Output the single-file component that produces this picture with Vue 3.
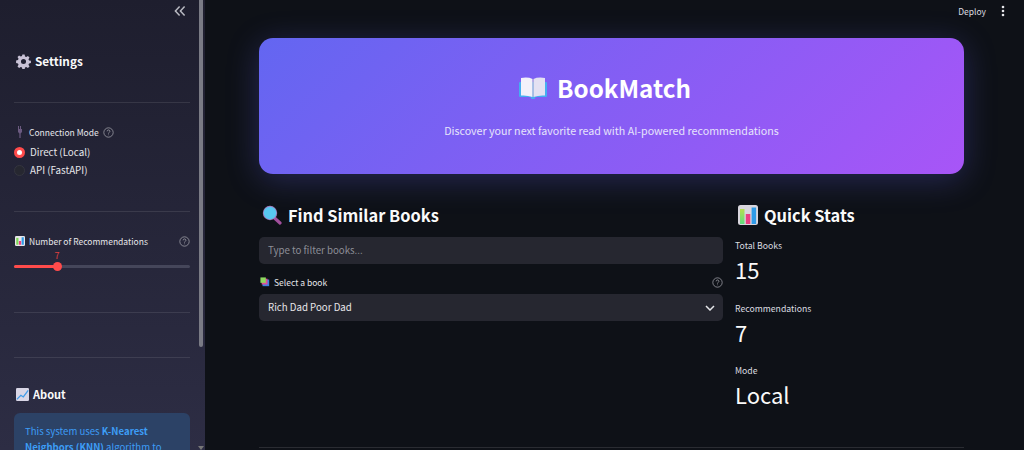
<template>
  <div class="app">
    <aside class="sidebar">
      <div class="collapse-row">
        <svg width="12" height="12" viewBox="0 0 12 12" fill="none" stroke="#b9bac2" stroke-width="1.5">
          <path d="M5.6 1.5 1.4 6l4.2 4.500M10.600 1.500 6.400 6l4.200 4.500" />
        </svg>
      </div>

      <h3 class="side-title settings-title">
        <svg class="gear" viewBox="0 0 16 16">
          <path fill="#c9c2d6" fill-rule="evenodd" d="M6.800.6h2.400l.4 2 1.300.6 1.800-1.100 1.700 1.700-1.100 1.800.6 1.300 2 .4v2.400l-2 .4-.6 1.300 1.100 1.800-1.700 1.700-1.800-1.100-1.300.6-.4 2H6.800l-.4-2-1.300-.6-1.800 1.100-1.700-1.700 1.100-1.800-.6-1.300-2-.4V6.800l2-.4.600-1.300-1.100-1.800 1.700-1.700 1.800 1.100 1.300-.6zM8 5.300a2.700 2.700 0 1 0 0 5.400 2.700 2.700 0 0 0 0-5.400z" />
        </svg>
        Settings
      </h3>
      <hr class="side-rule first-rule" />

      <div class="side-label conn-label">
        <svg class="plug" width="6" height="12" viewBox="0 0 6 12">
          <path fill="#6b5a80" d="M1 0h1v3h1V0h1v3h1v3L3.600 7.500V12H2.400V7.500L1 6z" />
        </svg>
        <span>Connection Mode</span>
        <svg class="help" viewBox="0 0 16 16" fill="none" stroke="#a3a4ab" stroke-width="1.100">
          <circle cx="8" cy="8" r="6.800" />
          <path d="M6 6.300a2 2 0 1 1 3 1.700c-.7.400-1 .8-1 1.500M8 11v.900" />
        </svg>
      </div>
      <div class="radio-row">
        <span class="radio on"></span>
        <span>Direct (Local)</span>
      </div>
      <div class="radio-row">
        <span class="radio"></span>
        <span>API (FastAPI)</span>
      </div>
      <hr class="side-rule second-rule" />

      <div class="side-label rec-label">
        <svg class="emoji-12" viewBox="0 0 16 16">
          <rect width="16" height="16" rx="2" fill="#e8e6ea" />
          <rect x="2" y="3" width="3.500" height="11" fill="#7fd858" />
          <rect x="6.300" y="8" width="3.500" height="6" fill="#ea3f83" />
          <rect x="10.600" y="2" width="3.500" height="12" fill="#2f9be8" />
        </svg>
        <span class="grow">Number of Recommendations</span>
        <svg class="help" viewBox="0 0 16 16" fill="none" stroke="#a3a4ab" stroke-width="1.100">
          <circle cx="8" cy="8" r="6.800" />
          <path d="M6 6.300a2 2 0 1 1 3 1.700c-.7.400-1 .8-1 1.500M8 11v.900" />
        </svg>
      </div>
      <div class="slider">
        <span class="slider-value" :style="{ left: sliderPos + '%' }">{{ recommendations }}</span>
        <div class="slider-track">
          <div class="slider-fill" :style="{ width: sliderPos + '%' }"></div>
          <span class="slider-thumb" :style="{ left: sliderPos + '%' }"></span>
        </div>
      </div>
      <hr class="side-rule third-rule" />
      <hr class="side-rule fourth-rule" />

      <h3 class="side-title about-title">
        <svg class="emoji-13" viewBox="0 0 16 16" fill="none">
          <rect width="16" height="16" rx="1.500" fill="#d9d6e6" />
          <path d="M1 14 6 9l3 2 6-8" stroke="#3f9be8" stroke-width="1.600" />
        </svg>
        About
      </h3>
      <div class="info-box">
        This system uses <b>K-Nearest Neighbors (KNN)</b> algorithm to find books similar to your selection.
      </div>

      <div class="side-scrollbar"></div>
      <svg class="scroll-arrow" width="6" height="4" viewBox="0 0 6 4"><path fill="#777" d="M0 0h6L3 4z" /></svg>
    </aside>

    <main class="main">
      <header class="topbar">
        <span class="deploy">Deploy</span>
        <svg width="4" height="12" viewBox="0 0 4 12" fill="#e6e7ea">
          <circle cx="2" cy="2" r="1.300" />
          <circle cx="2" cy="6" r="1.300" />
          <circle cx="2" cy="10" r="1.300" />
        </svg>
      </header>

      <div class="content">
        <section class="hero">
          <h1 class="hero-title">
            <svg class="book-icon" viewBox="0 0 28 22">
              <path fill="#45aef0" d="M1 5h26a1 1 0 0 1 1 1v13a1 1 0 0 1-1 1H16.500l-1 2h-3l-1-2H1a1 1 0 0 1-1-1V6a1 1 0 0 1 1-1z" />
              <path fill="#f3f1fa" d="M2 1q7-1.200 11.600 1V20Q8 18 2 18.500z" />
              <path fill="#e4e1f2" d="M26 1q-7-1.200-11.600 1V20Q20 18 26 18.500z" />
              <path fill="#a9a4cf" d="M13.600 2h.8v18h-.8z" />
            </svg>
            BookMatch
          </h1>
          <p class="hero-sub">Discover your next favorite read with AI-powered recommendations</p>
        </section>

        <div class="columns">
          <section class="col-left">
            <h2 class="col-title">
              <svg class="emoji-20" viewBox="0 0 20 20">
                <path d="m12.500 13 5.500 5" stroke="#a14f9c" stroke-width="3.200" stroke-linecap="round" fill="none" />
                <circle cx="8" cy="8" r="7.200" fill="#9c7fc0" />
                <circle cx="8" cy="8" r="6.200" fill="#58c8f2" />
              </svg>
              Find Similar Books
            </h2>
            <div class="field placeholder">Type to filter books...</div>
            <div class="select-label">
              <svg class="emoji-10" viewBox="0 0 12 12">
                <rect x="3" y="3" width="8" height="8" fill="#3f7fe0" />
                <rect x="2" y="2" width="7" height="7" fill="#e0509a" />
                <rect x="0.500" y="0.500" width="6.500" height="6.500" fill="#8fd860" />
              </svg>
              <span class="grow">Select a book</span>
              <svg class="help" viewBox="0 0 16 16" fill="none" stroke="#a3a4ab" stroke-width="1.100">
                <circle cx="8" cy="8" r="6.800" />
                <path d="M6 6.300a2 2 0 1 1 3 1.700c-.7.400-1 .8-1 1.500M8 11v.900" />
              </svg>
            </div>
            <div class="field select-box">
              <span>{{ selectedBook }}</span>
              <svg width="10" height="6" viewBox="0 0 10 6" fill="none" stroke="#e6e7ea" stroke-width="1.500">
                <path d="m1 1 4 4 4-4" />
              </svg>
            </div>
          </section>

          <section class="col-right">
            <h2 class="col-title">
              <svg class="emoji-20" viewBox="0 0 20 20">
                <defs>
                  <linearGradient id="bar-green" x1="0" y1="0" x2="0" y2="1">
                    <stop offset="0" stop-color="#b5e04e" />
                    <stop offset="1" stop-color="#5fdc80" />
                  </linearGradient>
                </defs>
                <rect width="20" height="20" rx="2.500" fill="#d9d6de" />
                <rect x="2" y="4" width="4.500" height="15" fill="url(#bar-green)" />
                <rect x="7.800" y="9" width="4.500" height="10" fill="#ea3f83" />
                <rect x="13.600" y="2.500" width="4.500" height="16.500" fill="#2f9be8" />
              </svg>
              Quick Stats
            </h2>
            <div class="metrics">
              <div v-for="stat in stats" :key="stat.label" class="metric">
                <div class="metric-label">{{ stat.label }}</div>
                <div class="metric-value">{{ stat.value }}</div>
              </div>
            </div>
          </section>
        </div>

        <hr class="main-rule" />
      </div>
    </main>
  </div>
</template>

<script setup>
const recommendations = 7
const sliderPos = 24.500
const selectedBook = 'Rich Dad Poor Dad'

const stats = [
  { label: 'Total Books', value: '15' },
  { label: 'Recommendations', value: '7' },
  { label: 'Mode', value: 'Local' },
]
</script>

<style>
html,
body {
  margin: 0;
  background: #0e1117;
  overflow: hidden;
}
</style>

<style scoped>
.app {
  display: flex;
  width: 1024px;
  height: 450px;
  overflow: hidden;
  background: #0e1117;
  color: #fafafa;
  font-family: "Noto Sans CJK SC", "Noto Sans", sans-serif;
}

.sidebar {
  position: relative;
  flex: 0 0 205px;
  box-sizing: border-box;
  height: 450px;
  overflow: hidden;
  padding: 0 14px;
  background: linear-gradient(180deg, #1e1e2e 0%, #2d2d44 100%);
}

.collapse-row {
  display: flex;
  justify-content: flex-end;
  height: 12px;
  padding: 5px 5px 0 0;
}

.side-title {
  display: flex;
  align-items: center;
  gap: 4px;
  margin: 0;
  font-size: 11.800px;
  font-weight: 600;
  line-height: 20px;
  width: 176px;
}

.settings-title {
  margin-top: 34px;
}

.gear {
  width: 15px;
  height: 15px;
  margin-left: 2px;
  flex: none;
}

.side-rule {
  width: 176px;
  height: 1px;
  margin: 0;
  border: 0;
  background: rgba(250, 250, 250, 0.1);
}

.first-rule { margin-top: 31px; }
.second-rule { margin-top: 32px; }
.third-rule { margin-top: 42px; }
.fourth-rule { margin-top: 44px; }

.side-label {
  display: flex;
  align-items: center;
  width: 176px;
  font-size: 8.500px;
  line-height: 14px;
  color: #e6e6ea;
}

.conn-label {
  margin-top: 22px;
  margin-bottom: 4px;
}

.plug {
  margin: 0 6px 0 3px;
}

.conn-label .help {
  margin-left: 4px;
}

.rec-label {
  margin-top: 22px;
  margin-left: 1px;
  width: 175px;
}

.rec-label .emoji-12 {
  margin-right: 4px;
}

.grow {
  flex: 1;
}

.help {
  width: 11px;
  height: 11px;
  flex: none;
}

.emoji-20 {
  width: 16px;
  height: 16px;
  flex: none;
}

.emoji-12 {
  width: 10px;
  height: 10px;
  flex: none;
}

.emoji-13 {
  width: 13px;
  height: 13px;
  margin-left: 2px;
  flex: none;
}

.emoji-10 {
  width: 10px;
  height: 10px;
  margin: 0 4px 0 1px;
  flex: none;
}

.radio-row {
  display: flex;
  align-items: center;
  gap: 5px;
  height: 18px;
  font-size: 9.800px;
  color: #e6e6ea;
}

.radio {
  box-sizing: border-box;
  width: 11px;
  height: 11px;
  border-radius: 50%;
  background: #262730;
  border: 1px solid #34353f;
}

.radio.on {
  border: 3.500px solid #ff4b4b;
  background: #fff;
}

.slider {
  position: relative;
  width: 176px;
  height: 22px;
}

.slider-value {
  position: absolute;
  top: 2px;
  transform: translateX(-50%);
  font-size: 9px;
  line-height: 12px;
  color: #e0403f;
}

.slider-track {
  position: absolute;
  top: 17px;
  left: 0;
  right: 0;
  height: 3px;
  border-radius: 2px;
  background: #45465a;
}

.slider-fill {
  height: 100%;
  border-radius: 2px;
  background: #ff4b4b;
}

.slider-thumb {
  position: absolute;
  top: -3px;
  width: 9px;
  height: 9px;
  margin-left: -4.500px;
  border-radius: 50%;
  background: #ff4b4b;
}

.about-title {
  margin-top: 26px;
  font-size: 11px;
}

.info-box {
  box-sizing: border-box;
  width: 176px;
  margin-top: 9px;
  padding: 10px 11px;
  border-radius: 6px;
  background: #2c4266;
  color: #3d9df6;
  font-size: 9.600px;
  line-height: 16px;
}

.info-box b {
  font-weight: 600;
}

.side-scrollbar {
  position: absolute;
  top: 0;
  right: 2px;
  width: 4px;
  height: 347px;
  border-radius: 0 0 2px 2px;
  background: #7a7b85;
}

.scroll-arrow {
  position: absolute;
  right: 1px;
  bottom: 0;
}

.main {
  flex: 1;
  min-width: 0;
}

.topbar {
  display: flex;
  justify-content: flex-end;
  align-items: center;
  gap: 15px;
  height: 22px;
  padding-right: 19px;
}

.deploy {
  font-size: 8.500px;
  color: #dcdde0;
}

.content {
  width: 705px;
  margin: 16px 0 0 54px;
}

.hero {
  box-sizing: border-box;
  height: 136px;
  padding-top: 31px;
  border-radius: 14px;
  background: linear-gradient(135deg, #6366f1 0%, #a855f7 100%);
  box-shadow: 0 6px 32px rgba(99, 102, 241, 0.28);
  text-align: center;
}

.hero-title {
  display: flex;
  justify-content: center;
  align-items: center;
  gap: 10px;
  margin: 0;
  padding-right: 13px;
  font-size: 24.200px;
  font-weight: 700;
  line-height: 38px;
  color: #fff;
}

.book-icon {
  width: 28px;
  height: 22px;
}

.hero-sub {
  margin: 15px 0 0;
  font-size: 10.700px;
  line-height: 18px;
  color: #e6e4fb;
}

.columns {
  display: flex;
  gap: 12px;
  margin-top: 28px;
}

.col-left {
  flex: 0 0 464px;
}

.col-right {
  flex: 1;
}

.col-title {
  display: flex;
  align-items: center;
  gap: 6px;
  margin: 0;
  height: 26px;
  font-size: 16.400px;
  font-weight: 600;
  line-height: 26px;
}

.col-left .col-title .emoji-20,
.col-right .col-title .emoji-20 {
  width: 20px;
  height: 20px;
  margin-left: 3px;
}

.field {
  box-sizing: border-box;
  height: 27px;
  padding: 0 9px;
  border-radius: 5px;
  background: #262730;
  font-size: 9.700px;
  line-height: 27px;
}

.placeholder {
  margin-top: 9px;
  color: #8d8e97;
}

.select-label {
  display: flex;
  align-items: center;
  height: 14px;
  margin-top: 11px;
  font-size: 8.500px;
  color: #e6e6ea;
}

.select-box {
  display: flex;
  justify-content: space-between;
  align-items: center;
  margin-top: 5px;
  padding-right: 8px;
  color: #e6e6ea;
}

.metrics {
  margin-top: 11px;
}

.metric {
  height: 62.500px;
}

.metric-label {
  height: 14px;
  font-size: 8.700px;
  line-height: 14px;
  color: #dcdde0;
}

.metric-value {
  font-size: 22px;
  line-height: 32px;
  color: #fafafa;
}

.main-rule {
  height: 1px;
  margin: 20px 0 0;
  border: 0;
  background: rgba(250, 250, 250, 0.12);
}
</style>
